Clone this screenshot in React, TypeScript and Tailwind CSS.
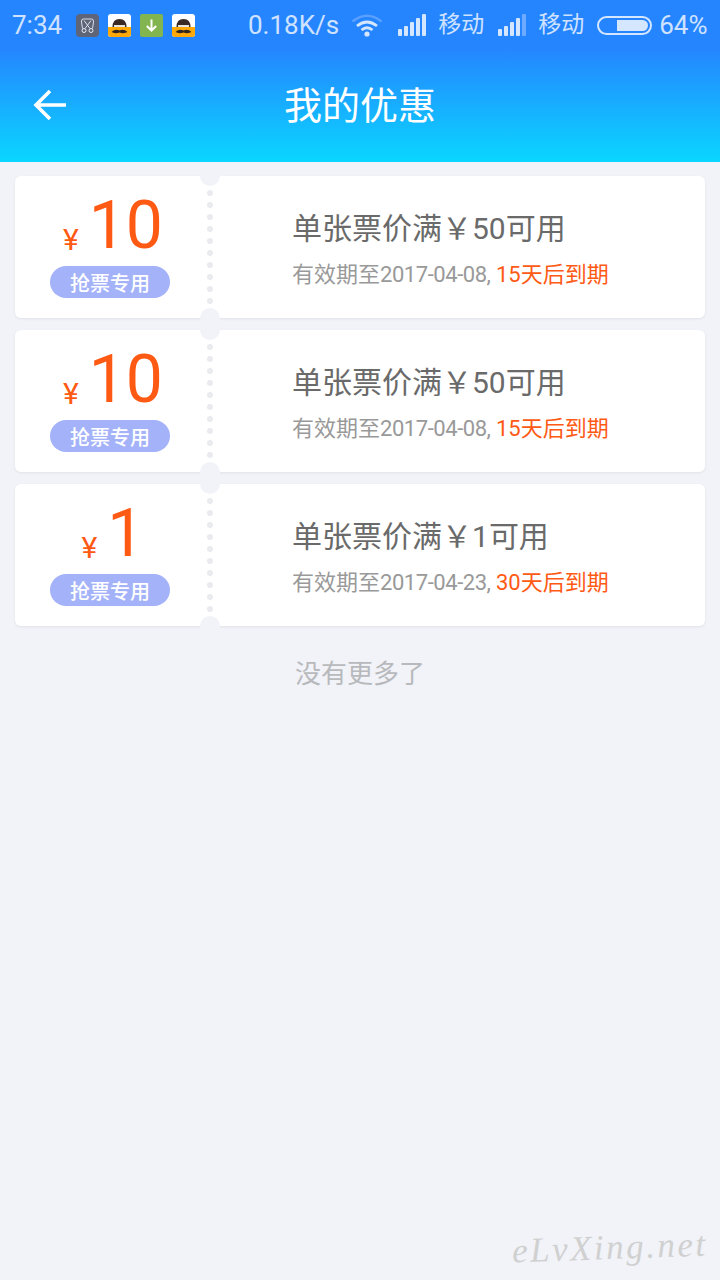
const coupons = [
  { amount: "10", min: "50", date: "2017-04-08", left: "15天后到期" },
  { amount: "10", min: "50", date: "2017-04-08", left: "15天后到期" },
  { amount: "1", min: "1", date: "2017-04-23", left: "30天后到期" },
];

const dots = [0, 1, 2, 3, 4, 5, 6, 7, 8, 9];

function MustacheIcon() {
  return (
    <svg width="23" height="23" viewBox="0 0 23 23">
      <rect width="23" height="23" rx="3" fill="#fff" />
      <path d="M0 13H23V20Q23 23 20 23H3Q0 23 0 20Z" fill="#ffa908" />
      <path d="M4.5 13Q4.5 5 11.5 5Q18.5 5 18.5 13Z" fill="#3a2a26" />
      <rect x="6" y="11" width="11" height="2" fill="#e8e4e0" />
      <path d="M3.5 18Q7 14.5 11.5 16.5Q16 14.5 19.5 18Q16 20 11.5 18.5Q7 20 3.5 18Z" fill="#33261f" />
    </svg>
  );
}

function ScissorsIcon() {
  return (
    <svg width="23" height="23" viewBox="0 0 23 23">
      <rect width="23" height="23" rx="4" fill="#5f6579" />
      <path d="M6.5 14.5L5.5 8V7Q5.5 5 7.5 5H15.5Q17.5 5 17.5 7V8L16.5 14.5" stroke="#e8eaf0" strokeWidth="0.9" fill="none" />
      <path d="M8 6.5L14 14.5M15 6.5L9 14.5" stroke="#e8eaf0" strokeWidth="0.9" fill="none" />
      <circle cx="8" cy="16.5" r="2" stroke="#e8eaf0" strokeWidth="1" fill="none" />
      <circle cx="15" cy="16.5" r="2" stroke="#e8eaf0" strokeWidth="1" fill="none" />
    </svg>
  );
}

function DownloadIcon() {
  return (
    <svg width="23" height="23" viewBox="0 0 23 23">
      <rect width="23" height="23" rx="2" fill="#82b44f" />
      <path d="M11.5 5.5V16.5M6.8 12L11.5 16.5L16.2 12" stroke="#fff" strokeWidth="2" fill="none" />
    </svg>
  );
}

function Wifi() {
  return (
    <svg width="32" height="24" viewBox="0 0 32 24" fill="none">
      <path d="M1.5 8.5Q16 -3 30.5 8.5" stroke="#5ba0ff" strokeWidth="2.5" />
      <path d="M6 13Q16 5 26 13" stroke="#d5e6ff" strokeWidth="2.8" />
      <path d="M10.5 17Q16 12.5 21.5 17" stroke="#d5e6ff" strokeWidth="2.8" />
      <circle cx="16" cy="21" r="2.6" fill="#d5e6ff" />
    </svg>
  );
}

function Signal({ last }: { last: string }) {
  return (
    <svg width="28" height="22" viewBox="0 0 28 22">
      <rect x="0" y="15" width="4" height="7" rx="1" fill="#d5e6ff" />
      <rect x="6" y="12" width="4" height="10" rx="1" fill="#d5e6ff" />
      <rect x="12" y="8" width="4" height="14" rx="1" fill="#d5e6ff" />
      <rect x="18" y="4" width="4" height="18" rx="1" fill="#d5e6ff" />
      <rect x="24" y="0" width="4" height="22" rx="1" fill={last} />
    </svg>
  );
}

function CouponCard({ amount, min, date, left }: (typeof coupons)[number]) {
  return (
    <div className="relative flex h-[142px] rounded-[6px] bg-white shadow-[0_1px_3px_rgba(0,0,0,0.07)]">
      {/* left part with amount */}
      <div className="flex w-[190px] flex-col items-center">
        <div className="flex h-[90px] items-end pl-[6px]">
          <span className="mb-[6px] mr-[10px] text-[30px] leading-[40px] text-[#ff5a14]">¥</span>
          <span className="text-[66px] leading-[80px] text-[#ff5a14]">{amount}</span>
        </div>
        <div className="flex h-[32px] w-[120px] items-center justify-center rounded-full bg-[#a4b3f9] pt-[3px] text-[20px] font-medium text-white">
          抢票专用
        </div>
      </div>

      {/* perforation */}
      <div className="absolute bottom-0 left-[192px] top-0 w-[6px]">
        <div className="flex flex-col gap-[6px] pt-[14px]">
          {dots.map((d) => (
            <span key={d} className="h-[6px] w-[6px] rounded-full bg-[#eaebef]" />
          ))}
        </div>
      </div>
      <span className="absolute left-[185px] top-[-10px] h-[20px] w-[20px] rounded-full bg-[#f1f3f8]" />
      <span className="absolute bottom-[-10px] left-[185px] h-[20px] w-[20px] rounded-full bg-[#f1f3f8]" />

      {/* right part */}
      <div className="ml-[88px] flex flex-col pt-[33px]">
        <div className="-ml-px text-[30px] leading-[40px] text-[#6a6a6a]">单张票价满￥{min}可用</div>
        <div className="-ml-px mt-[10px] text-[22px] leading-[32px] text-[#999]">
          有效期至<span className="tracking-[-0.45px]">{date},</span> <span className="text-[#ff5a14]">{left}</span>
        </div>
      </div>
    </div>
  );
}

export default function App() {
  return (
    <div className="flex h-[1280px] w-[720px] flex-col overflow-hidden bg-[#f1f3f8] font-['Roboto','Noto_Sans_CJK_SC',sans-serif]">
      {/* header */}
      <div className="h-[162px] bg-[linear-gradient(to_bottom,#2585ff_0px,#2585ff_48px,#0ad6ff_162px)]">
        <div className="flex h-[50px] items-center pl-[12px] text-[26px] text-[#cfe2ff]">
          <span className="w-[64px]">7:34</span>
          <div className="flex gap-[9px]">
            <ScissorsIcon />
            <MustacheIcon />
            <DownloadIcon />
            <MustacheIcon />
          </div>
          <span className="ml-[53px]">0.18K/s</span>
          <div className="ml-[12px]">
            <Wifi />
          </div>
          <div className="ml-[15px]">
            <Signal last="#d5e6ff" />
          </div>
          <span className="ml-[12px] text-[23px]">移动</span>
          <div className="ml-[14px]">
            <Signal last="#6eabff" />
          </div>
          <span className="ml-[12px] text-[23px]">移动</span>
          <div className="ml-[13px] flex h-[19px] w-[55px] items-center justify-end rounded-full border-[2px] border-[#d5e6ff] pr-[2px]">
            <div className="h-[11px] w-[31px] rounded-r-full bg-[#d5e6ff]" />
          </div>
          <span className="ml-[7px]">64%</span>
        </div>
        <div className="relative flex h-[112px] items-center justify-center">
          <svg className="absolute left-[33px] top-[39px]" width="34" height="32" viewBox="0 0 34 32" fill="none">
            <path d="M33 16H3M17 2L3 16L17 30" stroke="#fff" strokeWidth="3.6" />
          </svg>
          <span className="text-[38px] text-white">我的优惠</span>
        </div>
      </div>

      {/* coupon list */}
      <div className="flex flex-col gap-[12px] px-[15px] pt-[14px]">
        {coupons.map((c, i) => (
          <CouponCard key={i} {...c} />
        ))}
      </div>

      <div className="mt-[28px] text-center text-[26px] leading-[40px] text-[#b8b9bc]">没有更多了</div>

      {/* watermark */}
      <div className="mt-auto flex justify-end pb-[10px] pr-[12px]">
        <span className="-rotate-2 font-['Liberation_Serif',serif] text-[35px] italic leading-[44px] tracking-[2.5px] text-[#d0d0d0]">
          eLvXing.net
        </span>
      </div>
    </div>
  );
}
